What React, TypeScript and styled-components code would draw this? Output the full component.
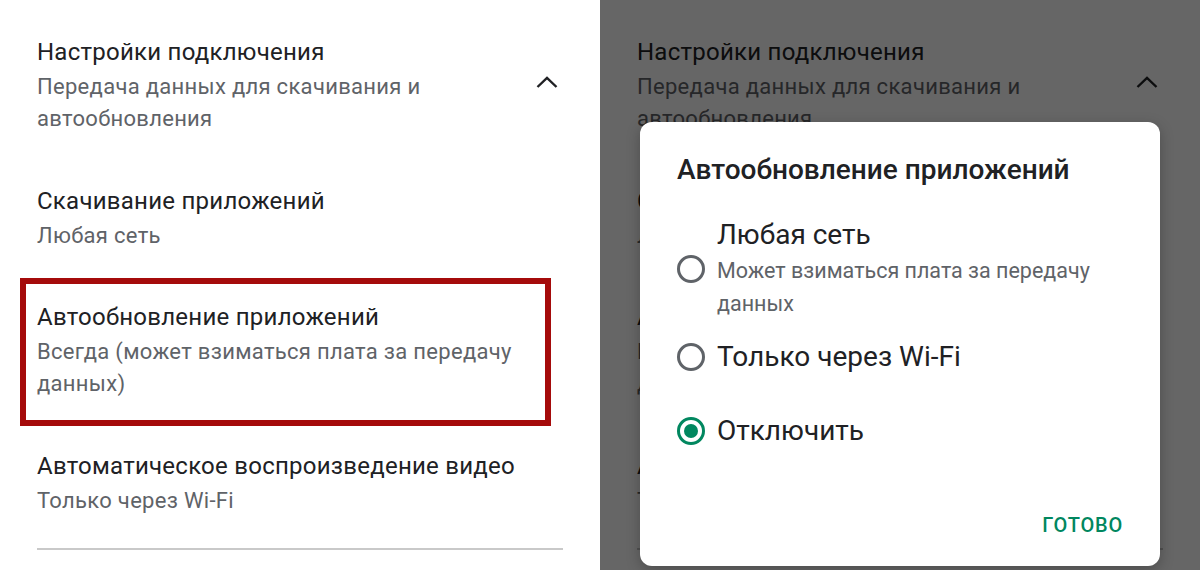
import React from "react";
import styled, { createGlobalStyle, css } from "styled-components";

const GlobalStyle = createGlobalStyle`
  html, body { margin: 0; padding: 0; background: #fff; }
  body { font-family: Roboto, "Noto Sans", "Liberation Sans", sans-serif; }
  * { box-sizing: border-box; }
`;

const Screen = styled.div`
  display: flex;
  width: 1200px;
  height: 570px;
  overflow: hidden;
`;

const Panel = styled.section`
  position: relative;
  flex: 0 0 600px;
  height: 570px;
  background: #fff;
  overflow: hidden;
`;

const List = styled.div`
  display: flex;
  flex-direction: column;
  padding: 11px 37px 0;
`;

const Item = styled.div<{ $highlight?: boolean }>`
  position: relative;
  display: flex;
  align-items: center;
  padding: 25px 0 24.5px;
  ${(p) =>
    p.$highlight &&
    css`
      &::after {
        content: "";
        position: absolute;
        top: 2px;
        bottom: -1px;
        left: -17px;
        right: 12px;
        border: 6px solid #a50b0b;
        pointer-events: none;
      }
    `}
`;

const ItemText = styled.div<{ $narrow?: boolean }>`
  flex: 1;
  display: flex;
  flex-direction: column;
  max-width: ${(p) => (p.$narrow ? "430px" : "none")};
`;

const ItemTitle = styled.div`
  font-size: 24px;
  line-height: 32px;
  letter-spacing: 0.25px;
  color: #202124;
  margin-bottom: 3px;
`;

const ItemSub = styled.div`
  font-size: 22px;
  line-height: 32px;
  letter-spacing: 0.3px;
  color: #5f6368;
`;

const Chevron = styled.svg`
  margin-left: auto;
  margin-right: 5px;
  margin-bottom: 7px;
  flex: 0 0 auto;
`;

const Divider = styled.div`
  height: 2px;
  margin: 7px 37px 0 37px;
  background: #c9c9c9;
`;

const Scrim = styled.div`
  position: absolute;
  inset: 0;
  background: rgba(0, 0, 0, 0.6);
`;

const Dialog = styled.div`
  position: absolute;
  left: 40px;
  top: 122px;
  width: 520px;
  height: 444px;
  background: #fff;
  border-radius: 12px;
  box-shadow: 0 4px 14px rgba(0, 0, 0, 0.25);
  display: flex;
  flex-direction: column;
  padding: 30px 37px 29px;
`;

const DialogTitle = styled.div`
  font-size: 28px;
  line-height: 36px;
  font-weight: 500;
  color: #202124;
  margin-bottom: 29px;
`;

const Options = styled.div`
  display: flex;
  flex-direction: column;
`;

const Option = styled.label`
  display: flex;
  align-items: center;
  gap: 12px;
  min-height: 74px;
`;

const Radio = styled.span<{ $checked?: boolean }>`
  flex: 0 0 28px;
  width: 28px;
  height: 28px;
  border-radius: 50%;
  border: 3px solid ${(p) => (p.$checked ? "#01875f" : "#5f6368")};
  display: flex;
  align-items: center;
  justify-content: center;
  &::after {
    content: "";
    width: 14px;
    height: 14px;
    border-radius: 50%;
    background: ${(p) => (p.$checked ? "#01875f" : "transparent")};
  }
`;

const OptionText = styled.div`
  display: flex;
  flex-direction: column;
`;

const OptionTitle = styled.div`
  font-size: 28px;
  line-height: 36px;
  color: #202124;
`;

const OptionSub = styled.div`
  margin-top: 1px;
  font-size: 21.5px;
  line-height: 33px;
  color: #5f6368;
`;

const Footer = styled.div`
  margin-top: auto;
  display: flex;
  justify-content: flex-end;
`;

const DoneButton = styled.button`
  border: none;
  background: none;
  padding: 0;
  font-family: inherit;
  font-size: 20px;
  line-height: 24px;
  font-weight: 500;
  letter-spacing: 0.8px;
  color: #01875f;
`;

const ChevronUp = () => (
  <Chevron width="22" height="12" viewBox="0 0 22 12">
    <polyline
      points="1.5,11 11,1.8 20.5,11"
      fill="none"
      stroke="#202124"
      strokeWidth="2.4"
    />
  </Chevron>
);

const SettingsList: React.FC<{ annotate?: boolean }> = ({ annotate }) => (
  <>
    <List>
      <Item>
        <ItemText $narrow>
          <ItemTitle>Настройки подключения</ItemTitle>
          <ItemSub>Передача данных для скачивания и автообновления</ItemSub>
        </ItemText>
        <ChevronUp />
      </Item>
      <Item>
        <ItemText>
          <ItemTitle>Скачивание приложений</ItemTitle>
          <ItemSub>Любая сеть</ItemSub>
        </ItemText>
      </Item>
      <Item $highlight={annotate}>
        <ItemText>
          <ItemTitle>Автообновление приложений</ItemTitle>
          <ItemSub>Всегда (может взиматься плата за передачу данных)</ItemSub>
        </ItemText>
      </Item>
      <Item>
        <ItemText>
          <ItemTitle>Автоматическое воспроизведение видео</ItemTitle>
          <ItemSub>Только через Wi-Fi</ItemSub>
        </ItemText>
      </Item>
    </List>
    <Divider />
  </>
);

export default function App() {
  return (
    <>
      <GlobalStyle />
      <Screen>
        <Panel>
          <SettingsList annotate />
        </Panel>
        <Panel>
          <SettingsList />
          <Scrim />
          <Dialog>
            <DialogTitle>Автообновление приложений</DialogTitle>
            <Options>
              <Option>
                <Radio />
                <OptionText>
                  <OptionTitle>Любая сеть</OptionTitle>
                  <OptionSub>Может взиматься плата за передачу данных</OptionSub>
                </OptionText>
              </Option>
              <Option>
                <Radio />
                <OptionText>
                  <OptionTitle>Только через Wi-Fi</OptionTitle>
                </OptionText>
              </Option>
              <Option>
                <Radio $checked />
                <OptionText>
                  <OptionTitle>Отключить</OptionTitle>
                </OptionText>
              </Option>
            </Options>
            <Footer>
              <DoneButton>ГОТОВО</DoneButton>
            </Footer>
          </Dialog>
        </Panel>
      </Screen>
    </>
  );
}
